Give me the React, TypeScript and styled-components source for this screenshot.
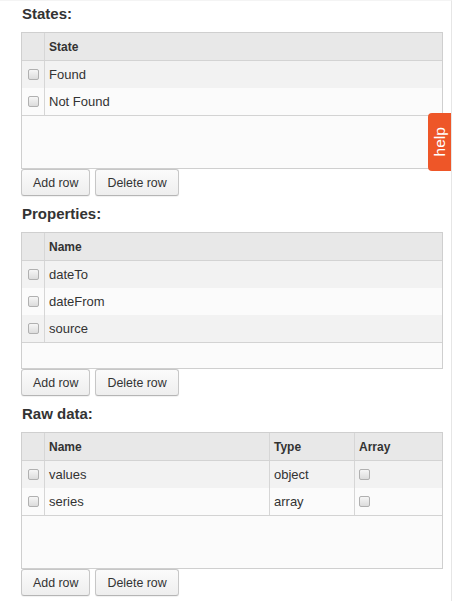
import React from "react";
import styled, { createGlobalStyle } from "styled-components";

const GlobalStyle = createGlobalStyle`
  html, body {
    margin: 0;
    padding: 0;
    background: #ffffff;
  }
  body {
    font-family: "Liberation Sans", Arial, sans-serif;
    color: #333333;
  }
`;

const Page = styled.div`
  box-sizing: border-box;
  width: 452px;
  min-height: 100vh;
  padding: 3px 8px 0 21px;
  border-top: 1px solid #f4f4f4;
  border-right: 1px solid #e6e6e6;
  display: flex;
  flex-direction: column;
  gap: 8px;
`;

const Section = styled.section`
  display: flex;
  flex-direction: column;
`;

const Heading = styled.h3`
  margin: 0 0 8px 0;
  height: 20px;
  line-height: 20px;
  font-size: 15px;
  font-weight: bold;
  color: #333333;
  padding-left: 1px;
`;

const Grid = styled.div`
  box-sizing: border-box;
  height: 137px;
  border: 1px solid #cfcfcf;
  background: #fbfbfb;
  overflow: hidden;
`;

const Body = styled.div`
  border-bottom: 1px solid #d3d3d3;
`;

const Row = styled.div<{ $cols: string; $bg: string; $head?: boolean }>`
  box-sizing: border-box;
  display: grid;
  grid-template-columns: ${(p) => p.$cols};
  height: ${(p) => (p.$head ? "28px" : "27px")};
  background: ${(p) => p.$bg};
  border-bottom: ${(p) => (p.$head ? "1px solid #d3d3d3" : "none")};
`;

const Cell = styled.div<{ $head?: boolean; $center?: boolean }>`
  box-sizing: border-box;
  display: flex;
  align-items: center;
  justify-content: ${(p) => (p.$center ? "center" : "flex-start")};
  padding: ${(p) => (p.$center ? "0" : "0 5px 0 4px")};
  border-left: 1px solid #d6d6d6;
  font-size: ${(p) => (p.$head ? "12px" : "13px")};
  font-weight: ${(p) => (p.$head ? "bold" : "normal")};
  color: #333333;
  white-space: nowrap;
  overflow: hidden;
  &:first-child {
    border-left: none;
  }
`;

const Check = styled.span`
  box-sizing: border-box;
  display: inline-block;
  width: 11px;
  height: 11px;
  border: 1px solid #b0b0b0;
  border-radius: 2px;
  background: linear-gradient(to bottom, #f6f6f6, #dcdcdc);
`;

const Buttons = styled.div`
  display: flex;
  gap: 5px;
`;

const Button = styled.button`
  box-sizing: border-box;
  height: 27px;
  padding: 0 11px;
  font-family: "Liberation Sans", Arial, sans-serif;
  font-size: 12.4px;
  color: #333333;
  background: linear-gradient(to bottom, #fbfbfb, #eeeeee);
  border: 1px solid #c7c7c7;
  border-bottom-color: #b5b5b5;
  border-radius: 3px;
  box-shadow: 0 1px 1px rgba(0, 0, 0, 0.06);
  cursor: pointer;
`;

const HelpTab = styled.div`
  position: fixed;
  top: 113px;
  right: 2px;
  width: 23px;
  height: 58px;
  background: #ee5628;
  border-radius: 4px 0 0 4px;
  display: flex;
  align-items: center;
  justify-content: center;
`;

const HelpText = styled.span`
  display: inline-block;
  transform: rotate(-90deg);
  color: #ffffff;
  font-family: "Liberation Sans", Arial, sans-serif;
  font-size: 15.5px;
  line-height: 1;
  white-space: nowrap;
`;

type Column = { title: string; width: string; kind: "text" | "check" };
type SectionData = {
  title: string;
  columns: Column[];
  rows: (string | boolean)[][];
};

const sections: SectionData[] = [
  {
    title: "States:",
    columns: [{ title: "State", width: "1fr", kind: "text" }],
    rows: [["Found"], ["Not Found"]],
  },
  {
    title: "Properties:",
    columns: [{ title: "Name", width: "1fr", kind: "text" }],
    rows: [["dateTo"], ["dateFrom"], ["source"]],
  },
  {
    title: "Raw data:",
    columns: [
      { title: "Name", width: "1fr", kind: "text" },
      { title: "Type", width: "85px", kind: "text" },
      { title: "Array", width: "88px", kind: "check" },
    ],
    rows: [
      ["values", "object", false],
      ["series", "array", false],
    ],
  },
];

function DataSection({ data }: { data: SectionData }) {
  const cols = ["22px", ...data.columns.map((c) => c.width)].join(" ");
  return (
    <Section>
      <Heading>{data.title}</Heading>
      <Grid>
        <Row $cols={cols} $bg="#e8e8e8" $head>
          <Cell $head />
          {data.columns.map((c) => (
            <Cell $head key={c.title}>
              {c.title}
            </Cell>
          ))}
        </Row>
        <Body>
          {data.rows.map((r, i) => (
            <Row $cols={cols} $bg={i % 2 === 0 ? "#f2f2f2" : "#fbfbfb"} key={i}>
              <Cell $center>
                <Check />
              </Cell>
              {data.columns.map((c, j) => (
                <Cell key={c.title}>{c.kind === "check" ? <Check /> : (r[j] as string)}</Cell>
              ))}
            </Row>
          ))}
        </Body>
      </Grid>
      <Buttons>
        <Button>Add row</Button>
        <Button>Delete row</Button>
      </Buttons>
    </Section>
  );
}

export default function App() {
  return (
    <>
      <GlobalStyle />
      <Page>
        {sections.map((s) => (
          <DataSection data={s} key={s.title} />
        ))}
      </Page>
      <HelpTab>
        <HelpText>help</HelpText>
      </HelpTab>
    </>
  );
}
